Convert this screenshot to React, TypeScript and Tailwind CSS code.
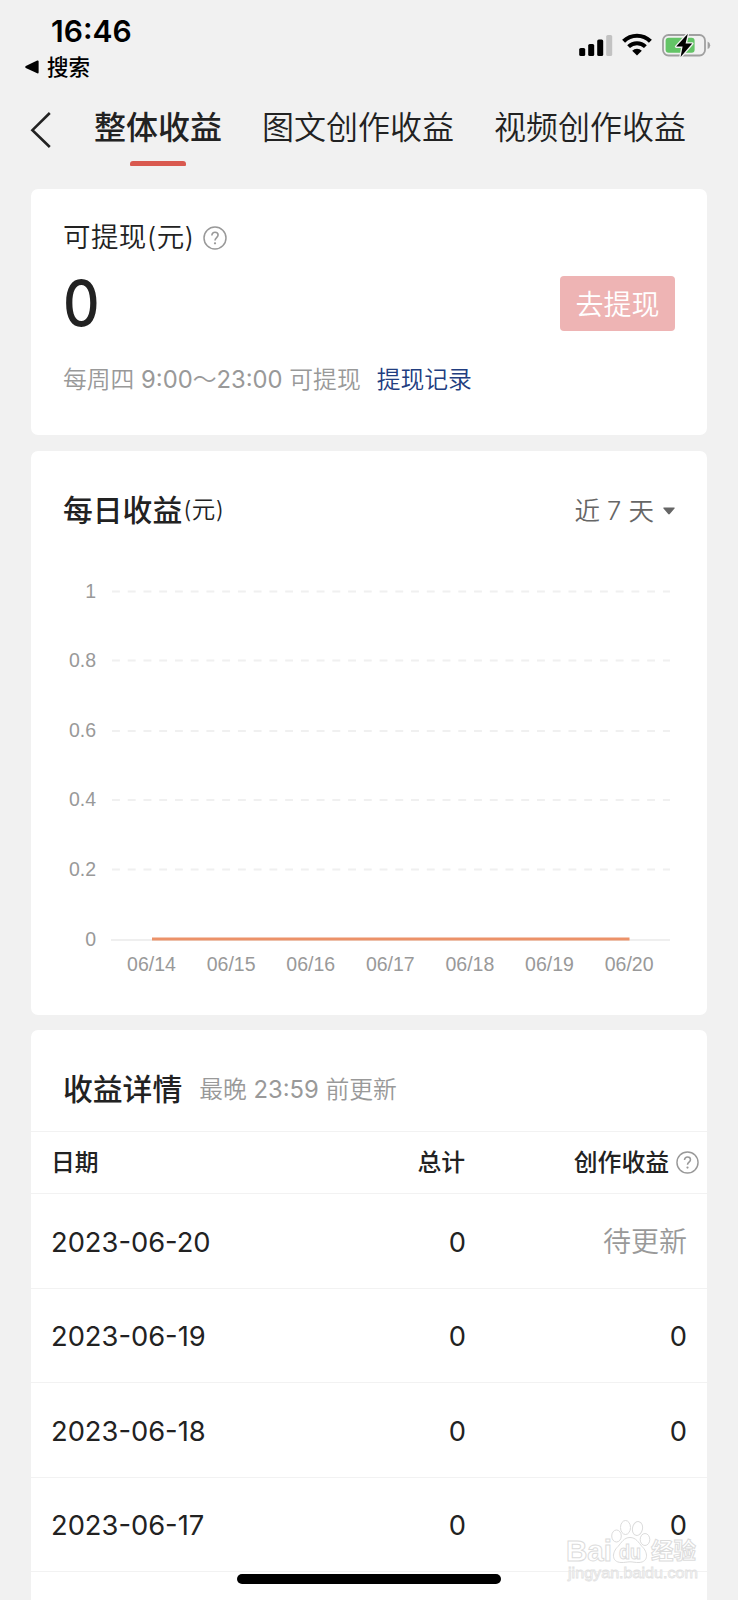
import { clsx } from "clsx";

const tabs = ["整体收益", "图文创作收益", "视频创作收益"];

const yTicks = [
  { label: "1", y: 40.5 },
  { label: "0.8", y: 109.5 },
  { label: "0.6", y: 180 },
  { label: "0.4", y: 249 },
  { label: "0.2", y: 318.5 },
];

const days = ["06/14", "06/15", "06/16", "06/17", "06/18", "06/19", "06/20"];

const rows = [
  { date: "2023-06-20", total: "0", income: "待更新", pending: true },
  { date: "2023-06-19", total: "0", income: "0" },
  { date: "2023-06-18", total: "0", income: "0" },
  { date: "2023-06-17", total: "0", income: "0" },
];

const HelpIcon = ({ className }: { className?: string }) => (
  <svg viewBox="0 0 24 24" fill="none" stroke="#999" className={className}>
    <circle cx="12" cy="12" r="11" strokeWidth="1.5" />
    <path d="M8.9 9.4c0-1.9 1.3-3.1 3.1-3.1s3.1 1.1 3.1 2.8c0 2.4-3.1 2.6-3.1 5.3" strokeWidth="1.6" />
    <circle cx="12" cy="17.3" r="1.15" fill="#999" stroke="none" />
  </svg>
);

const StatusBar = () => (
  <div className="flex justify-between h-[92px] pl-[25px] pr-[27px] text-black">
    <div className="pt-[15px]">
      <div className="pl-[26px] text-[30px] leading-8 font-semibold">16:46</div>
      <div className="flex items-center mt-[4px] text-[21.5px] leading-8 font-medium">
        <svg width="14" height="14" viewBox="0 0 14 14" className="mr-[8px]">
          <path d="M0.8 6 12.2 0.6Q13.6 0.2 13.6 1.6V12.4Q13.6 13.8 12.2 13.3L0.8 8Q-.4 7 .8 6Z" />
        </svg>
        搜索
      </div>
    </div>
    <div className="flex items-start pt-[33px]">
      {/* Signal */}
      <svg width="34" height="24" viewBox="0 0 34 24">
        <rect x="0.2" y="15" width="6" height="8" rx="1.6" />
        <rect x="9.2" y="11" width="6" height="12" rx="1.6" />
        <rect x="18.2" y="6.5" width="6" height="16.5" rx="1.6" />
        <rect x="27.2" y="2" width="6" height="21" rx="1.6" fill="#c2c2c2" />
      </svg>
      {/* Wifi */}
      <svg width="30" height="24" viewBox="0 0 30 24" className="ml-[9px]" fill="none" stroke="#000">
        <path d="M1.6 8.2a19.2 19.2 0 0 1 26.8 0" strokeWidth="4.2" />
        <path d="M6.6 13.6a12 12 0 0 1 16.8 0" strokeWidth="4" />
        <path d="M15 22.6l-4.8-4.9a6.8 6.8 0 0 1 9.6 0z" fill="#000" stroke="none" />
      </svg>
      {/* Battery, charging */}
      <svg width="49" height="26" viewBox="0 0 49 26" className="ml-[10px]">
        <rect x="1" y="2" width="42" height="20.5" rx="5.5" fill="none" stroke="#a0a0a0" strokeWidth="1.8" />
        <path d="M45.6 8.6q2.6 1 2.6 3.7t-2.6 3.7z" fill="#a0a0a0" />
        <rect x="3.6" y="4.7" width="29" height="15" rx="3" fill="#63c466" />
        <path
          d="M25.8.7 14.2 13.6h6.4L18.6 24 30.2 10.6h-6.6z"
          fill="#000"
          stroke="#f1f1f1"
          strokeWidth="2.6"
          strokeLinejoin="round"
          paintOrder="stroke"
        />
      </svg>
    </div>
  </div>
);

const TabBar = () => (
  <nav className="flex h-[97px] pl-[30px] text-[#222]">
    <svg width="22" height="38" viewBox="0 0 22 38" className="mt-[19px] mr-[42px]" fill="none" stroke="#222" strokeWidth="2.6">
      <path d="M19.8 2 2.4 19.2 19.8 36" />
    </svg>
    <div className="flex gap-10">
      {tabs.map((tab, i) => (
        <div key={tab} className="flex flex-col items-center pt-[12px]">
          <span className={clsx("text-[32px] leading-[48px] whitespace-nowrap", i === 0 && "font-medium")}>{tab}</span>
          {i === 0 && <span className="w-[56px] h-[5px] mt-[9px] rounded-t-[3px] rounded-b-[1px] bg-[#d9594f]" />}
        </div>
      ))}
    </div>
  </nav>
);

const BalanceCard = () => (
  <section className="h-[246px] px-8 pt-[30px] bg-white rounded-[7px]">
    <div className="flex items-center h-9 text-[27.5px] leading-9 tracking-[0.4px] text-[#222]">
      可提现(元)
      <HelpIcon className="w-6 h-6 ml-[8px] mt-[2px]" />
    </div>
    <div className="flex items-center justify-between mt-[20px]">
      <span className="text-[63px] leading-[56px] font-medium text-[#222] origin-left scale-x-90">0</span>
      <button className="w-[115px] h-[55px] pt-[3px] rounded-[4px] bg-[#eeb4b4] text-[28px] text-white">去提现</button>
    </div>
    <div className="flex mt-[31px] text-[23.8px] leading-9 text-[#999]">
      <span>
        每周四 <span className="font-normal">9:00</span>～<span className="font-normal">23:00</span> 可提现
      </span>
      <a className="ml-[16px] text-[#213d7f]">提现记录</a>
    </div>
  </section>
);

const DailyChart = () => (
  <section className="h-[564px] pt-[38px] bg-white rounded-[7px]">
    <div className="flex items-center justify-between h-[42px] px-8">
      <div className="flex items-center text-[#222]">
        <h2 className="text-[29.8px] leading-[42px] font-medium">每日收益</h2>
        <span className="ml-px text-[23.5px] tracking-[0.4px]">(元)</span>
      </div>
      <div className="flex items-center pt-[3px] text-[25.5px] text-[#666]">
        近 7 天
        <svg width="12" height="8" viewBox="0 0 12 8" className="ml-[9px]" fill="#666">
          <path d="M.8.4h10.4q1 .4.3 1.2L6.8 7.1Q6 7.9 5.2 7.1L.5 1.6Q-.2.8.8.4Z" />
        </svg>
      </div>
    </div>
    <svg width="676" height="450" viewBox="0 0 676 450" className="mt-[20px] font-['Liberation_Sans',sans-serif] font-normal">
      {yTicks.map((tick) => (
        <g key={tick.label}>
          <text x="65" y={tick.y + 6} textAnchor="end" fontSize="19.5" fill="#999">
            {tick.label}
          </text>
          <line x1="81" x2="639" y1={tick.y} y2={tick.y} stroke="#f0f0f0" strokeWidth="1.8" strokeDasharray="7.9 7.84" />
        </g>
      ))}
      <text x="65" y="394.5" textAnchor="end" fontSize="19.5" fill="#999">
        0
      </text>
      <line x1="80" x2="639" y1="389" y2="389" stroke="#efefef" strokeWidth="1.8" />
      <line x1="121" x2="598.5" y1="388" y2="388" stroke="#ec9269" strokeWidth="3" />
      {days.map((day, i) => (
        <text key={day} x={120.5 + i * 79.6} y="420" textAnchor="middle" fontSize="19.5" fill="#999">
          {day}
        </text>
      ))}
    </svg>
  </section>
);

const DetailTable = () => (
  <section className="h-[570px] bg-white rounded-t-[7px] text-[#222]">
    <div className="flex items-center h-[102px] px-8 pt-[18px] border-b border-[#f2f2f2]">
      <h2 className="text-[29.8px] font-medium">收益详情</h2>
      <span className="ml-[17px] text-[23.8px] text-[#999]">
        最晚 <span className="font-normal">23:59</span> 前更新
      </span>
    </div>
    <div className="grid grid-cols-[214px_200px_1fr] items-center h-[62px] pl-[20px] pr-[8px] border-b border-[#f2f2f2] text-[23.8px] font-medium">
      <span>日期</span>
      <span className="text-right">总计</span>
      <span className="flex items-center justify-end">
        创作收益
        <HelpIcon className="w-[23px] h-[23px] ml-[7px] -mt-px" />
      </span>
    </div>
    {rows.map((row) => (
      <div
        key={row.date}
        className="grid grid-cols-[214px_201px_1fr] items-center h-[94.6px] pt-[3px] pl-[20px] pr-[20px] border-b border-[#f2f2f2] text-[27.3px] leading-none"
      >
        <span className="font-normal">{row.date}</span>
        <span className="text-right font-normal">{row.total}</span>
        <span className={clsx("text-right", row.pending ? "text-[28px] text-[#999]" : "font-normal")}>{row.income}</span>
      </div>
    ))}
  </section>
);

const Watermark = () => (
  <svg
    width="140"
    height="70"
    viewBox="0 0 140 70"
    className="absolute left-[563px] top-[1517px] font-['Liberation_Sans','Noto_Sans_CJK_SC',sans-serif]"
    fill="#fff"
    stroke="#dcdcdc"
    strokeWidth="1"
  >
    <text x="3" y="44" fontSize="30" fontWeight="700" textLength="46" lengthAdjust="spacingAndGlyphs">
      Bai
    </text>
    <ellipse cx="53.5" cy="19" rx="4.8" ry="6" />
    <ellipse cx="62.5" cy="10.5" rx="5" ry="7" />
    <ellipse cx="74.5" cy="11.5" rx="5" ry="7" transform="rotate(12 74.5 11.5)" />
    <ellipse cx="82" cy="22.5" rx="4.8" ry="6" />
    <path d="M67 20.5c6 0 8.5 5 12 9 6 5.500 7 15.500-3 16-4 .2-6-.7-9-.7s-5 .9-9 .7c-10-.5-9-10.500-3-16 3.500-4 6-9 12-9z" />
    <text x="56" y="42" fontSize="20" fontWeight="700" textLength="22" lengthAdjust="spacingAndGlyphs">
      du
    </text>
    <text x="88" y="42" fontSize="22.5" fontWeight="700">
      经验
    </text>
    <text x="5" y="61" fontSize="15" stroke="#e2e2e2" strokeWidth=".8" textLength="130" lengthAdjust="spacingAndGlyphs">
      jingyan.baidu.com
    </text>
  </svg>
);

export default function App() {
  return (
    <div className="relative w-[738px] h-[1600px] overflow-hidden bg-[#f1f1f1] font-['Inter','Noto_Sans_CJK_SC',sans-serif] font-[350]">
      <StatusBar />
      <TabBar />
      <main className="flex flex-col gap-[15.5px] px-[31px]">
        <BalanceCard />
        <DailyChart />
        <DetailTable />
      </main>
      <Watermark />
      {/* Home indicator */}
      <div className="absolute left-[237px] top-[1574px] w-[264px] h-[10px] rounded-full bg-black" />
    </div>
  );
}
